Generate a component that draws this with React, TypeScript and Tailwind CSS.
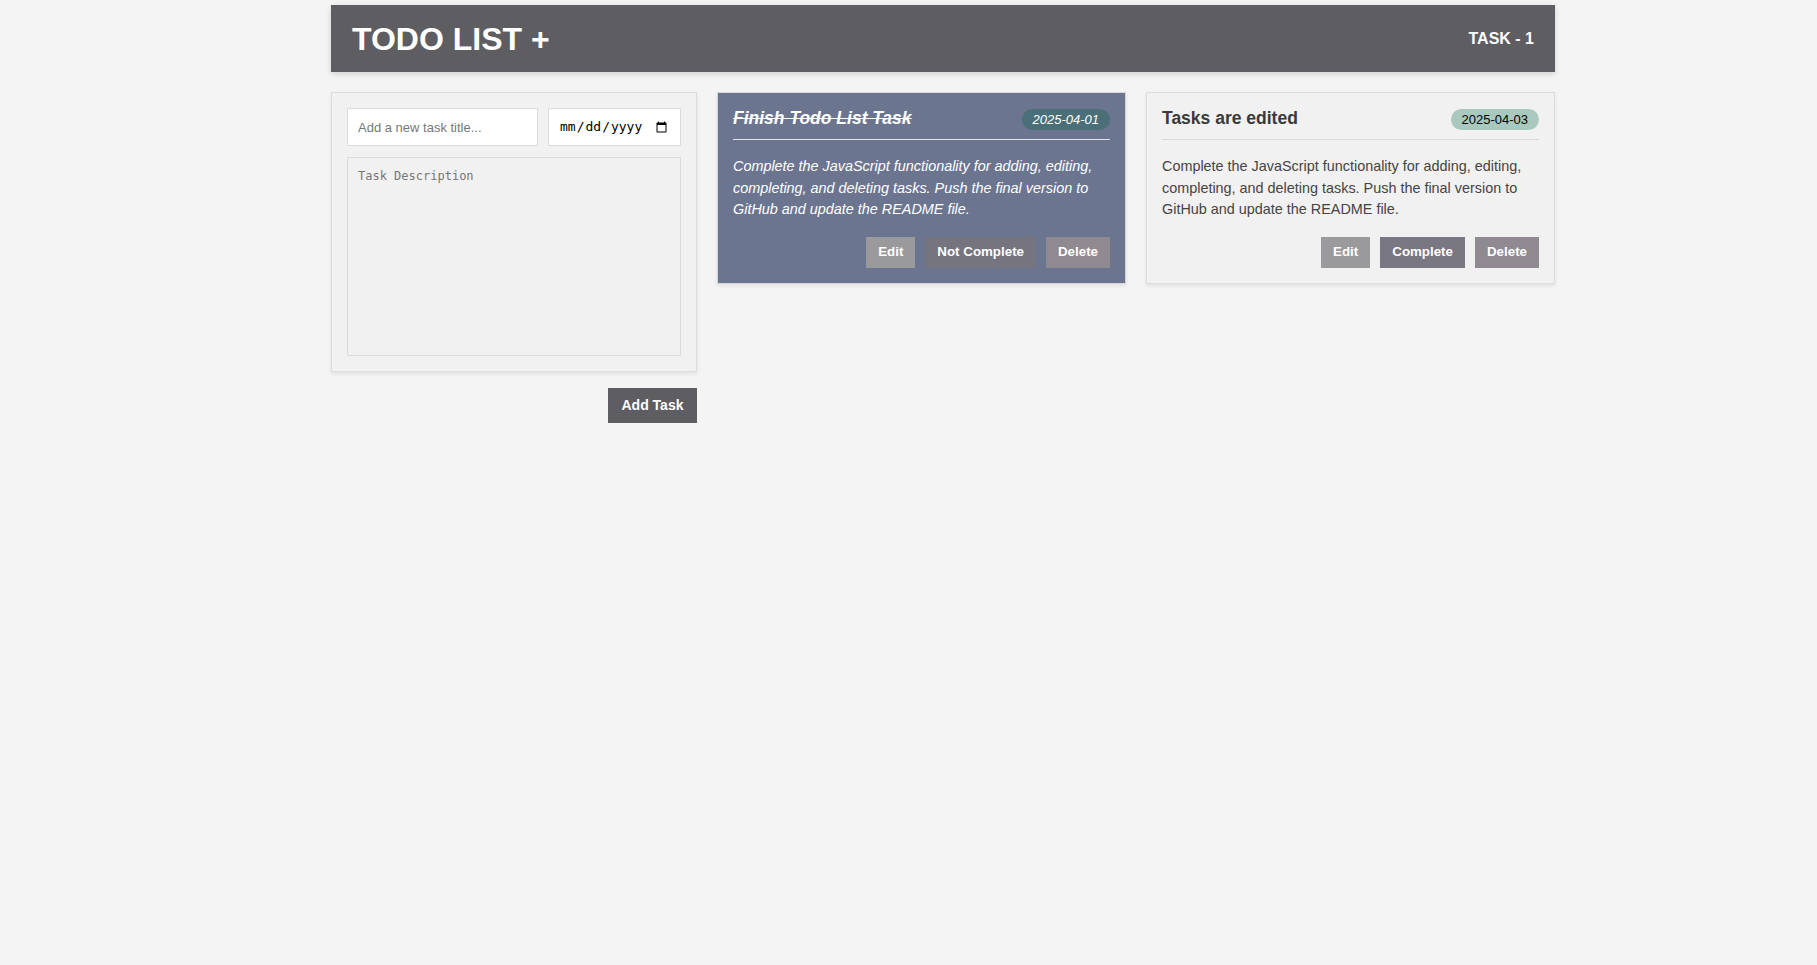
import React from 'react';

interface Task {
  title: string;
  date: string;
  description: string;
  completed: boolean;
}

const TASKS: Task[] = [
  {
    title: 'Finish Todo List Task',
    date: '2025-04-01',
    description:
      'Complete the JavaScript functionality for adding, editing, completing, and deleting tasks. Push the final version to GitHub and update the README file.',
    completed: true,
  },
  {
    title: 'Tasks are edited',
    date: '2025-04-03',
    description:
      'Complete the JavaScript functionality for adding, editing, completing, and deleting tasks. Push the final version to GitHub and update the README file.',
    completed: false,
  },
];

function TaskCard({ task }: { task: Task }) {
  const done = task.completed;

  return (
    <div
      className={
        done
          ? 'min-w-0 flex-1 border border-[#d6d6d6] bg-[#6b7590] px-[15px] pt-[14px] pb-[15px] shadow-[0_2px_4px_rgba(0,0,0,0.08)]'
          : 'min-w-0 flex-1 border border-[#dcdcdc] bg-[#f1f1f1] px-[15px] pt-[14px] pb-[15px] shadow-[0_2px_4px_rgba(0,0,0,0.08)]'
      }
    >
      <div className="flex items-start justify-between pb-[9px]">
        <h3
          className={
            done
              ? 'text-[17.5px] font-bold italic leading-[22px] text-white line-through'
              : 'text-[17.5px] font-bold leading-[22px] text-[#3a3a3a]'
          }
        >
          {task.title}
        </h3>
        <span
          className={
            done
              ? 'mt-[2px] rounded-full bg-[#4b6f78] px-[11px] py-[2px] text-[13px] italic leading-[17px] text-white'
              : 'mt-[2px] rounded-full bg-[#a9c9be] px-[11px] py-[2px] text-[13px] leading-[17px] text-black'
          }
        >
          {task.date}
        </span>
      </div>
      <div className={done ? 'h-px bg-[#dfe2ea]' : 'h-px bg-[#d8d8d8]'} />
      <p
        className={
          done
            ? 'mt-[16px] text-[14.4px] italic leading-[21.5px] text-white'
            : 'mt-[16px] text-[14.4px] leading-[21.5px] text-[#444]'
        }
      >
        {task.description}
      </p>
      <div className="mt-[16px] flex justify-end gap-[10px]">
        <button className="h-[31px] bg-[#9a9a9c] px-[12px] text-[13.33px] font-bold text-white">
          Edit
        </button>
        <button
          className={
            done
              ? 'h-[31px] bg-[#76747f] px-[12px] text-[13.33px] font-bold text-white'
              : 'h-[31px] bg-[#797782] px-[12px] text-[13.33px] font-bold text-white'
          }
        >
          {done ? 'Not Complete' : 'Complete'}
        </button>
        <button className="h-[31px] bg-[#8f8a90] px-[12px] text-[13.33px] font-bold text-white">
          Delete
        </button>
      </div>
    </div>
  );
}

export default function App() {
  return (
    <div className="min-h-screen bg-[#f4f4f4] pt-[5px] font-['Liberation_Sans',Arial,sans-serif]">
      <div className="ml-[331px] w-[1224px]">
        {/* Header */}
        <header className="flex h-[67px] items-center justify-between bg-[#5e5d62] px-[21px] shadow-[0_2px_6px_rgba(0,0,0,0.15)]">
          <h1 className="text-[32px] font-bold leading-none text-white">TODO LIST +</h1>
          <span className="text-[16px] font-bold text-white">TASK - 1</span>
        </header>

        <main className="mt-[20px] flex items-start gap-[20px]">
          {/* New task form */}
          <div className="w-[366px] shrink-0">
            <div className="border border-[#dcdcdc] bg-[#f1f1f1] p-[15px] shadow-[0_2px_4px_rgba(0,0,0,0.08)]">
              <div className="flex gap-[10px]">
                <input
                  type="text"
                  placeholder="Add a new task title..."
                  className="h-[38px] w-[191px] shrink-0 border border-[#dcdcdc] bg-white px-[10px] text-[13px] text-[#333] outline-none placeholder:text-[#777]"
                />
                <input
                  type="date"
                  className="h-[38px] w-0 min-w-0 flex-1 border border-[#dcdcdc] bg-white px-[10px] font-['DejaVu_Sans_Mono',monospace] text-[13px] text-black outline-none"
                />
              </div>
              <textarea
                placeholder="Task Description"
                className="mt-[11px] block h-[199px] w-full resize-none border border-[#dcdcdc] bg-[#f1f1f1] px-[10px] py-[9px] font-['DejaVu_Sans_Mono',monospace] text-[12px] text-[#333] outline-none placeholder:text-[#777]"
              />
            </div>
            <div className="mt-[16px] flex justify-end">
              <button className="h-[35px] w-[89px] bg-[#5e5d62] text-[14px] font-bold text-white">
                Add Task
              </button>
            </div>
          </div>

          {/* Task cards */}
          {TASKS.map((task) => (
            <TaskCard key={task.title} task={task} />
          ))}
        </main>
      </div>
    </div>
  );
}
